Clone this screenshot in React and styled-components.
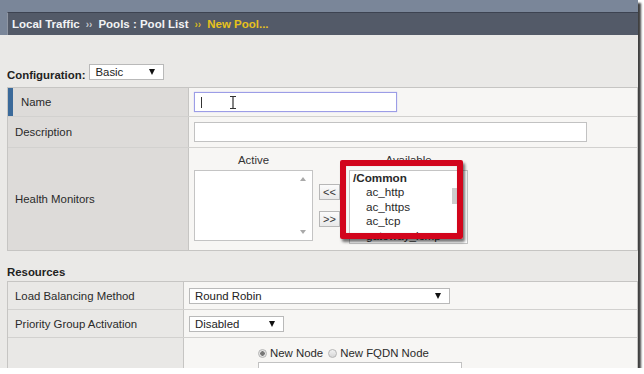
import styled, { createGlobalStyle } from "styled-components"

const GlobalStyle = createGlobalStyle`
  body {
    margin: 0;
    background: #ffffff;
    font-family: "Liberation Sans", Arial, sans-serif;
    font-size: 11.4px;
    color: #222;
  }
`

const Screen = styled.div`
  width: 638px;
  height: 368px;
  overflow: hidden;
  background: #eae9e7;
  box-shadow: 3px 3px 2px rgba(0, 0, 0, 0.75);
`

const Header = styled.div`
  background: #7a8699;
  padding: 12px 0 0 7px;
`

const Crumbs = styled.div`
  height: 22px;
  display: flex;
  align-items: center;
  gap: 5px;
  padding-left: 4px;
  background: #535a68;
  border-top: 1px solid #3d4351;
  border-left: 1px solid #8f96a3;
  font-weight: bold;
  font-size: 11.5px;
  color: #f2f3f5;
`

const Sep = styled.span`
  font-size: 10px;
  color: ${(p) => (p.$current ? "#d9b820" : "#c3c7ce")};
  padding: 0 1px;
`

const Current = styled.span`
  color: #e8c21c;
`

const Body = styled.div`
  padding-left: 7px;
`

const ConfigRow = styled.div`
  display: flex;
  align-items: flex-end;
  gap: 4px;
  margin-top: 29px;
  margin-bottom: 7px;
`

const Bold = styled.span`
  font-weight: bold;
  font-size: 11.4px;
  line-height: 14px;
  color: #222;
  margin-bottom: ${(p) => p.$drop || 0}px;
`

const Select = styled.div`
  width: ${(p) => p.$w}px;
  height: 16px;
  box-sizing: border-box;
  display: flex;
  align-items: center;
  justify-content: space-between;
  padding: 0 8px 0 5px;
  background: #fff;
  border: 1px solid #b9b9b9;
  color: #222;
  &::after {
    content: "";
    border-left: 3.5px solid transparent;
    border-right: 3.5px solid transparent;
    border-top: 6px solid #111;
  }
`

const Table = styled.div`
  border: 1px solid #c6c5c3;
  background: #f7f6f4;
`

const Row = styled.div`
  display: grid;
  grid-template-columns: ${(p) => p.$label}px 1fr;
  height: ${(p) => p.$h}px;
  & + & {
    border-top: 1px solid #d2d1cf;
  }
`

const Label = styled.div`
  display: flex;
  align-items: center;
  padding-left: ${(p) => (p.$marked ? 8 : 7)}px;
  background: ${(p) => p.$bg || "#dddbd9"};
  border-left: ${(p) => (p.$marked ? "5px solid #3b6a9a" : "0")};
  border-right: 1px solid #c6c5c3;
  color: #2a2a2a;
`

const Value = styled.div`
  display: flex;
  align-items: ${(p) => (p.$top ? "flex-start" : "center")};
  padding-left: 5px;
  padding-top: ${(p) => p.$pt || 0}px;
`

const TextInput = styled.div`
  position: relative;
  width: ${(p) => p.$w}px;
  height: 20px;
  box-sizing: border-box;
  background: #fff;
  border: 1px solid ${(p) => (p.$focus ? "#9c9de6" : "#c2c2c2")};
  box-shadow: ${(p) => (p.$focus ? "0 0 1px #b9b9f0" : "none")};
`

const Caret = styled.div`
  position: absolute;
  left: 6px;
  top: 4px;
  width: 1px;
  height: 11px;
  background: #333;
`

const IBeam = styled.svg`
  position: absolute;
  left: 34px;
  top: 3px;
`

const Monitors = styled.div`
  display: flex;
  align-items: flex-start;
`

const ListCol = styled.div`
  position: relative;
  display: flex;
  flex-direction: column;
  align-items: center;
  gap: 3px;
`

const ListHead = styled.div`
  color: #333;
  line-height: 13px;
`

const ListBox = styled.div`
  position: relative;
  width: ${(p) => p.$w}px;
  height: ${(p) => p.$h}px;
  box-sizing: border-box;
  overflow: hidden;
  background: #fff;
  border: 1px solid #c4c4c4;
  padding: 0 0 0 3px;
  align-self: stretch;
`

const Track = styled.div`
  position: absolute;
  right: 0;
  top: 0;
  bottom: 0;
  width: 17px;
  background: #fff;
`

const Arrow = styled.div`
  position: absolute;
  left: 5px;
  ${(p) => (p.$down ? "bottom: 6px;" : "top: 6px;")}
  border-left: 3.5px solid transparent;
  border-right: 3.5px solid transparent;
  ${(p) => (p.$down ? "border-top" : "border-bottom")}: 4px solid #a9a9a9;
`

const Thumb = styled.div`
  position: absolute;
  left: 2px;
  top: 17px;
  width: 6px;
  height: 16px;
  background: #cdcdcd;
`

const Item = styled.div`
  line-height: 14.4px;
  font-size: 11.7px;
  padding-left: ${(p) => (p.$group ? 0 : 13)}px;
  font-weight: ${(p) => (p.$group ? "bold" : "normal")};
  color: #2a2a2a;
  white-space: nowrap;
`

const Buttons = styled.div`
  display: flex;
  flex-direction: column;
  gap: 11px;
  margin: 30px 9px 0 6px;
`

const MoveButton = styled.div`
  width: 21px;
  height: 16px;
  box-sizing: border-box;
  display: flex;
  align-items: center;
  justify-content: center;
  background: linear-gradient(#fbfbfb, #e9e9e9);
  border: 1px solid #b7b7b7;
  font-size: 11px;
  color: #333;
`

const Highlight = styled.div`
  position: absolute;
  left: -9px;
  top: 6px;
  width: 123px;
  height: 79px;
  box-sizing: border-box;
  border: 6px solid #d2051c;
  border-radius: 2px;
  box-shadow: 2px 3px 3px rgba(0, 0, 0, 0.55), inset 0 0 1px rgba(0, 0, 0, 0.3);
  pointer-events: none;
`

const Section = styled.div`
  margin: 14px 0 2px;
`

const NodeForm = styled.div`
  display: grid;
  grid-template-columns: 65px 204px auto;
  column-gap: 4px;
  row-gap: 3px;
  padding-top: 9px;
`

const Radios = styled.div`
  grid-column: 2 / 4;
  display: flex;
  align-items: center;
  gap: 2px;
  color: #2a2a2a;
`

const Radio = styled.span`
  width: 9px;
  height: 9px;
  border-radius: 50%;
  box-sizing: border-box;
  border: 1px solid #b5b5b5;
  background: ${(p) =>
    p.$on
      ? "radial-gradient(circle, #777 0 2px, #e4e4e4 2.5px)"
      : "linear-gradient(#f2f2f2, #d6d6d6)"};
  margin-left: ${(p) => (p.$gap ? 3 : 0)}px;
  margin-right: 1px;
`

const NodeLabel = styled.div`
  text-align: right;
  color: #2a2a2a;
  padding-top: 5px;
`

const NodeInput = styled.div`
  height: 20px;
  box-sizing: border-box;
  background: #fff;
  border: 1px solid #c2c2c2;
`

export default function App() {
  return (
    <>
      <GlobalStyle />
      <Screen>
        <Header>
          <Crumbs>
            <span>Local Traffic</span>
            <Sep>››</Sep>
            <span>Pools : Pool List</span>
            <Sep $current>››</Sep>
            <Current>New Pool...</Current>
          </Crumbs>
        </Header>
        <Body>
          <ConfigRow>
            <Bold $drop={-2}>Configuration:</Bold>
            <Select $w={75}>Basic</Select>
          </ConfigRow>
          <Table>
            <Row $label={181} $h={28}>
              <Label $marked>Name</Label>
              <Value>
                <TextInput $w={203} $focus>
                  <Caret />
                  <IBeam width="8" height="13" viewBox="0 0 8 13">
                    <path d="M1 0.5h6M4 0.5v12M1 12.5h6" stroke="#333" strokeWidth="1.2" fill="none" />
                  </IBeam>
                </TextInput>
              </Value>
            </Row>
            <Row $label={181} $h={30}>
              <Label>Description</Label>
              <Value>
                <TextInput $w={393} />
              </Value>
            </Row>
            <Row $label={181} $h={102}>
              <Label>Health Monitors</Label>
              <Value $top $pt={6}>
                <Monitors>
                  <ListCol>
                    <ListHead>Active</ListHead>
                    <ListBox $w={119} $h={71}>
                      <Track>
                        <Arrow />
                        <Arrow $down />
                      </Track>
                    </ListBox>
                  </ListCol>
                  <Buttons>
                    <MoveButton>&lt;&lt;</MoveButton>
                    <MoveButton>&gt;&gt;</MoveButton>
                  </Buttons>
                  <ListCol>
                    <ListHead>Available</ListHead>
                    <ListBox $w={119} $h={74}>
                      <Item $group>/Common</Item>
                      <Item>ac_http</Item>
                      <Item>ac_https</Item>
                      <Item>ac_tcp</Item>
                      <Item>gateway_icmp</Item>
                      <Track>
                        <Thumb />
                      </Track>
                    </ListBox>
                    <Highlight />
                  </ListCol>
                </Monitors>
              </Value>
            </Row>
          </Table>
          <Section>
            <Bold>Resources</Bold>
          </Section>
          <Table>
            <Row $label={176} $h={27}>
              <Label $bg="#e9e8e6">Load Balancing Method</Label>
              <Value>
                <Select $w={261}>Round Robin</Select>
              </Value>
            </Row>
            <Row $label={176} $h={27}>
              <Label $bg="#e9e8e6">Priority Group Activation</Label>
              <Value>
                <Select $w={95}>Disabled</Select>
              </Value>
            </Row>
            <Row $label={176} $h={80}>
              <Label $bg="#e9e8e6" />
              <Value $top>
                <NodeForm>
                  <Radios>
                    <Radio $on />
                    New Node
                    <Radio $gap />
                    New FQDN Node
                  </Radios>
                  <NodeLabel>Node Name:</NodeLabel>
                  <NodeInput />
                  <NodeLabel>(Optional)</NodeLabel>
                </NodeForm>
              </Value>
            </Row>
          </Table>
        </Body>
      </Screen>
    </>
  )
}
